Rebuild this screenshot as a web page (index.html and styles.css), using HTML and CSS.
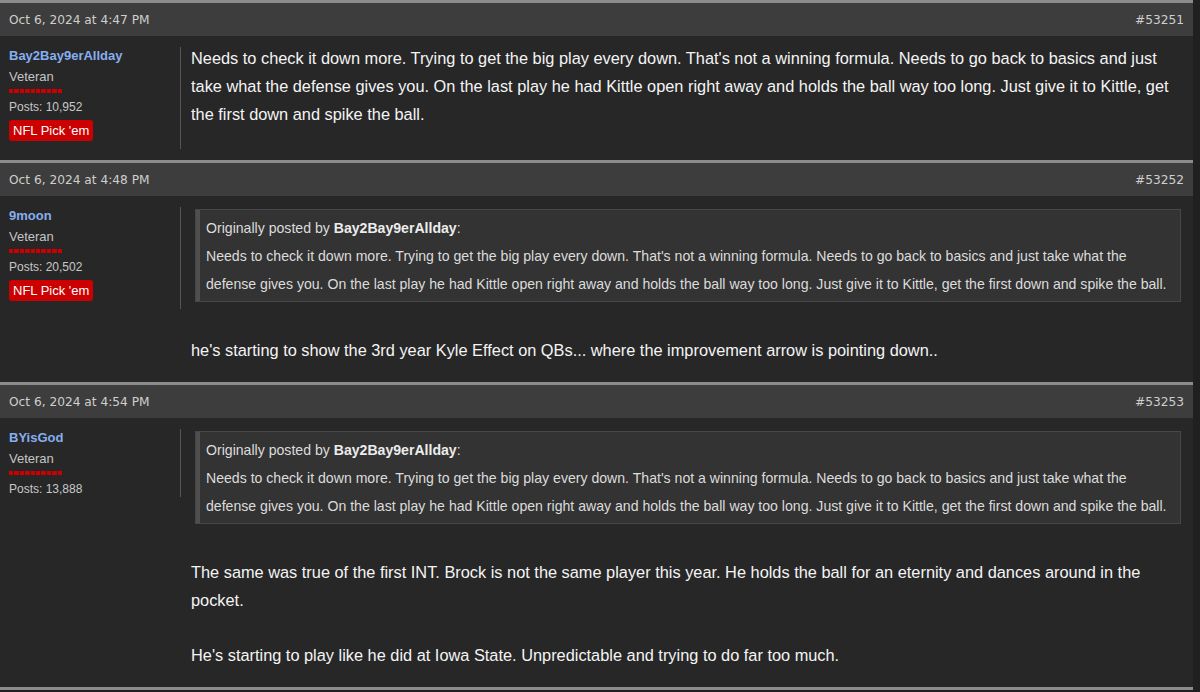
FILE: index.html
```html
<!DOCTYPE html>
<html lang="en">
<head>
<meta charset="utf-8">
<title>Thread</title>
<link rel="stylesheet" href="styles.css">
</head>
<body>
<main class="thread">
  <article class="post">
    <header class="post-head"><span class="post-date">Oct 6, 2024 at 4:47 PM</span><span class="post-num">#53251</span></header>
    <div class="post-body">
      <aside class="user">
        <div class="user-name">Bay2Bay9erAllday</div>
        <div class="user-title">Veteran</div>
        <div class="rep"><i></i><i></i><i></i><i></i><i></i><i></i><i></i><i></i><i></i><i></i></div>
        <div class="user-posts">Posts: 10,952</div>
        <div class="badge">NFL Pick 'em</div>
      </aside>
      <div class="message">Needs to check it down more. Trying to get the big play every down. That's not a winning formula. Needs to go back to basics and just take what the defense gives you. On the last play he had Kittle open right away and holds the ball way too long. Just give it to Kittle, get the first down and spike the ball.</div>
    </div>
  </article>

  <article class="post">
    <header class="post-head"><span class="post-date">Oct 6, 2024 at 4:48 PM</span><span class="post-num">#53252</span></header>
    <div class="post-body">
      <aside class="user">
        <div class="user-name">9moon</div>
        <div class="user-title">Veteran</div>
        <div class="rep"><i></i><i></i><i></i><i></i><i></i><i></i><i></i><i></i><i></i><i></i></div>
        <div class="user-posts">Posts: 20,502</div>
        <div class="badge">NFL Pick 'em</div>
      </aside>
      <div class="message">
        <blockquote class="quote"><div>Originally posted by <b>Bay2Bay9erAllday</b>:</div>Needs to check it down more. Trying to get the big play every down. That's not a winning formula. Needs to go back to basics and just take what the defense gives you. On the last play he had Kittle open right away and holds the ball way too long. Just give it to Kittle, get the first down and spike the ball.</blockquote>
        he's starting to show the 3rd year Kyle Effect on QBs... where the improvement arrow is pointing down..
      </div>
    </div>
  </article>

  <article class="post">
    <header class="post-head"><span class="post-date">Oct 6, 2024 at 4:54 PM</span><span class="post-num">#53253</span></header>
    <div class="post-body">
      <aside class="user">
        <div class="user-name">BYisGod</div>
        <div class="user-title">Veteran</div>
        <div class="rep"><i></i><i></i><i></i><i></i><i></i><i></i><i></i><i></i><i></i><i></i></div>
        <div class="user-posts">Posts: 13,888</div>
      </aside>
      <div class="message">
        <blockquote class="quote"><div>Originally posted by <b>Bay2Bay9erAllday</b>:</div>Needs to check it down more. Trying to get the big play every down. That's not a winning formula. Needs to go back to basics and just take what the defense gives you. On the last play he had Kittle open right away and holds the ball way too long. Just give it to Kittle, get the first down and spike the ball.</blockquote>
        <p class="para">The same was true of the first INT. Brock is not the same player this year. He holds the ball for an eternity and dances around in the pocket.</p>
        <p class="para">He's starting to play like he did at Iowa State. Unpredictable and trying to do far too much.</p>
      </div>
    </div>
  </article>

  <div class="post post-next"></div>
</main>
</body>
</html>
```

FILE: styles.css
```css
html, body {
  margin: 0;
  padding: 0;
  background: #202020;
}

.thread {
  width: 1193px;
  background: #272727;
}

.post {
  border-top: 3px solid #8c8c8c;
}

.post-head {
  height: 33px;
  display: flex;
  align-items: center;
  justify-content: space-between;
  padding: 0 9px;
  background: #3d3d3d;
  font-family: "DejaVu Sans", Verdana, sans-serif;
  font-size: 12.2px;
  color: #cfcfcf;
}

.post-body {
  display: flex;
  align-items: flex-start;
  padding: 11px 0;
  background: #272727;
}

.user {
  flex: 0 0 171px;
  padding-left: 9px;
  border-right: 1px solid #555;
  font-family: "Liberation Sans", Arial, sans-serif;
}

.user-name {
  font-size: 13px;
  font-weight: bold;
  line-height: 17px;
  color: #86aef0;
}

.user-title {
  margin-top: 5px;
  font-size: 13px;
  line-height: 16px;
  color: #c4c4c4;
}

.rep {
  display: flex;
  gap: 1px;
  margin-top: 4px;
  height: 4px;
}

.rep i {
  width: 4.4px;
  height: 4px;
  background: #cc0000;
}

.user-posts {
  margin-top: 6px;
  font-size: 12px;
  line-height: 16px;
  color: #c8c8c8;
}

.badge {
  display: inline-block;
  margin: 5px 0 8px;
  padding: 0 4px;
  height: 21px;
  line-height: 21px;
  border-radius: 3px;
  background: #cc0000;
  color: #fff;
  font-size: 13px;
}

.message {
  flex: 1;
  margin-top: -3px;
  padding: 0 8px 7px 10px;
  font-family: "Liberation Sans", Arial, sans-serif;
  font-size: 16.35px;
  line-height: 28px;
  color: #f4f4f4;
}

.quote {
  margin: 5px 4px 34px 4px;
  padding: 4px 10px 3px 10px;
  background: #333;
  border: 1px solid #474747;
  box-shadow: inset 4px 0 0 #4f4f4f;
  font-size: 14.1px;
  line-height: 28px;
  color: #dcdcdc;
}

.quote b {
  color: #ececec;
}

.para {
  margin: 0;
}

.para + .para {
  margin-top: 27px;
}

.post-next {
  height: 0;
}
```
